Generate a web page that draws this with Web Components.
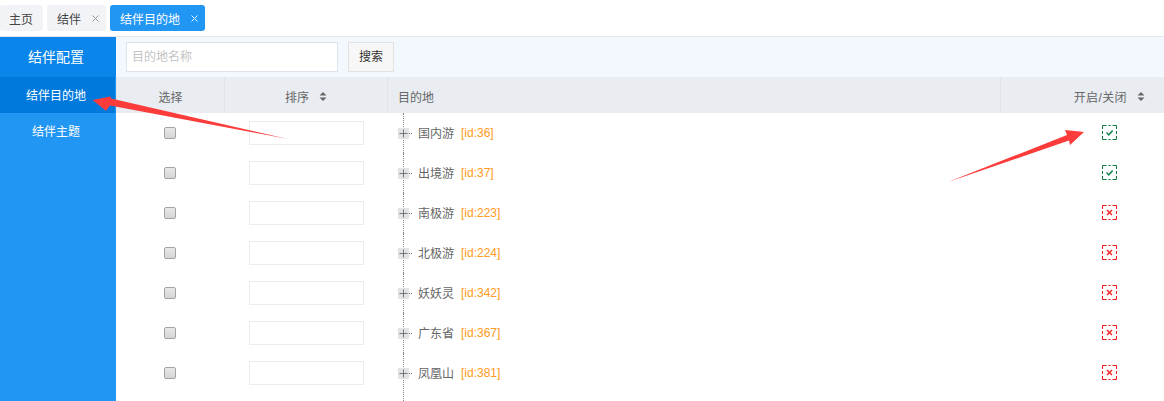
<!DOCTYPE html>
<html lang="zh">
<head>
<meta charset="utf-8">
<title>结伴目的地</title>
<style>
  html, body { margin: 0; height: 100%; overflow: hidden; background: #fff; }
  body { font: 12px "Liberation Sans", "Noto Sans CJK SC", sans-serif; color: #666; }
</style>
</head>
<body>
<app-shell></app-shell>

<script>
class TabItem extends HTMLElement {
  connectedCallback() {
    const closable = this.hasAttribute('closable')
    this.attachShadow({ mode: 'open' }).innerHTML = `
      <style>
        :host { display: flex; align-items: center; height: 26px; padding: 0 10px; gap: 11px; border-radius: 3px;
          background: #f2f3f6; color: #444; }
        :host([closable]) { padding-right: 7px; }
        :host([active]) { background: #2196f3; color: #fff; }
        svg { display: block; stroke: #999; }
        :host([active]) svg { stroke: #e8f4fe; }
      </style>
      <slot></slot>
      ${closable ? '<svg width="7" height="7" viewBox="0 0 7 7"><path d="M.5.5l6 6M6.5.5l-6 6" fill="none"/></svg>' : ''}
    `
  }
}
customElements.define('tab-item', TabItem)

class TabBar extends HTMLElement {
  connectedCallback() {
    this.attachShadow({ mode: 'open' }).innerHTML = `
      <style>
        :host { display: flex; gap: 4px; padding-top: 5px; height: 31px; border-bottom: 1px solid #e3e8ef; }
        ::slotted(tab-item:first-child) { padding-left: 9px; }
      </style>
      <slot></slot>
    `
  }
}
customElements.define('tab-bar', TabBar)

class SideNav extends HTMLElement {
  connectedCallback() {
    this.attachShadow({ mode: 'open' }).innerHTML = `
      <style>
        :host { display: block; width: 116px; flex: none; background: #2196f3; color: #fff; text-align: center; }
        .title { height: 40px; line-height: 40px; font-size: 14px; background: #0a85ea; padding-right: 4px; }
        .item { box-sizing: border-box; height: 36px; line-height: 38px; padding-right: 4px; }
        .on { background: #0079dc; margin-right: 1px; padding-right: 3px; }
      </style>
      <div class="title">结伴配置</div>
      <div class="item on">结伴目的地</div>
      <div class="item">结伴主题</div>
    `
  }
}
customElements.define('side-nav', SideNav)

class SearchBar extends HTMLElement {
  connectedCallback() {
    this.attachShadow({ mode: 'open' }).innerHTML = `
      <style>
        :host { display: flex; align-items: center; gap: 10px; height: 40px; padding: 0 10px; background: #f2f8fd; }
        .field { box-sizing: border-box; width: 212px; height: 30px; line-height: 28px; padding: 0 5px;
          border: 1px solid #dfe4ea; background: #fff; color: #c4c4c4; }
        .btn { box-sizing: border-box; width: 46px; height: 30px; line-height: 28px; text-align: center;
          border: 1px solid #e2e2e2; background: #f7f7f7; color: #333; }
      </style>
      <div class="field">目的地名称</div>
      <div class="btn">搜索</div>
    `
  }
}
customElements.define('search-bar', SearchBar)

const SORT_ICON = '<svg width="8" height="9" viewBox="0 0 8 9" fill="#666"><path d="M4 0l3.500 3.500h-7zM4 9L.5 5.500h7z"/></svg>'

class TableHead extends HTMLElement {
  connectedCallback() {
    this.attachShadow({ mode: 'open' }).innerHTML = `
      <style>
        :host { display: grid; grid-template-columns: 108px 163px 613px 164px; height: 36px; background: #e9ecf1; color: #666; }
        div { display: flex; align-items: center; gap: 10px; justify-content: center; border-left: 1px solid #e0e3e8; padding-top: 2px; box-sizing: border-box; }
        div:first-child { border-left: 0; }
        .name { justify-content: flex-start; padding-left: 10px; }
        .state { justify-content: flex-end; padding-right: 19px; }
        .state span { letter-spacing: .4px; }
        svg { display: block; }
      </style>
      <div>选择</div>
      <div>排序 ${SORT_ICON}</div>
      <div class="name">目的地</div>
      <div class="state"><span>开启/关闭</span> ${SORT_ICON}</div>
    `
  }
}
customElements.define('table-head', TableHead)

class StatusIcon extends HTMLElement {
  connectedCallback() {
    const on = this.getAttribute('state') === 'on'
    const color = on ? '#0b7a3f' : '#f01414'
    const mark = on
      ? '<path d="M4.500 7.500l2.200 2.300 4-4.200" fill="none" stroke="#1f8a55" stroke-width="1.600"/>'
      : '<path d="M5 5l5 5M10 5l-5 5" fill="none" stroke="#f02828" stroke-width="1.500"/>'
    this.attachShadow({ mode: 'open' }).innerHTML = `
      <style>:host { display: block; width: 15px; height: 15px; } svg { display: block; }</style>
      <svg width="15" height="15" viewBox="0 0 15 15">
        <path d="M.5 4V.5h4M10.500.5h4V4M14.500 6v3M14.500 11v3.500h-4M8.500 14.500h-2M4.500 14.500h-4V11M.5 9V6M6.500.5h2" fill="none" stroke="${color}"/>
        ${mark}
      </svg>
    `
  }
}
customElements.define('status-icon', StatusIcon)

class DestRow extends HTMLElement {
  connectedCallback() {
    const name = this.getAttribute('name')
    const id = this.getAttribute('dest-id')
    const state = this.getAttribute('state')
    this.attachShadow({ mode: 'open' }).innerHTML = `
      <style>
        :host { display: grid; grid-template-columns: 108px 163px 613px 164px; height: 40px; align-items: center; }
        .check { justify-self: center; box-sizing: border-box; width: 12px; height: 12px; border-radius: 2px;
          border: 1px solid #a3a3a3; background: linear-gradient(#e8e8e8, #d6d6d6); }
        .sort { justify-self: end; margin-right: 23px; box-sizing: border-box; width: 115px; height: 24px;
          border: 1px solid #ececec; background: #fff; }
        .tree { display: flex; align-items: center; height: 40px; padding-left: 11px; position: relative; }
        .line { position: absolute; left: 16px; top: 0; bottom: 0; border-left: 1px dotted #888; }
        :host(:last-child) .line { bottom: -8px; }
        .plus { position: relative; width: 11px; height: 11px; background: #e1e3e5; }
        .plus svg { display: block; }
        .dots { position: relative; width: 3px; border-top: 1px dotted #777; margin-right: 6px; }
        .label { margin-bottom: 2px; }
        .id { color: #ff9a22; margin-left: 7px; }
        .state { justify-self: end; margin-right: 47px; margin-bottom: 2px; }
      </style>
      <div class="check"></div>
      <div class="sort"></div>
      <div class="tree">
        <span class="line"></span>
        <span class="plus"><svg width="11" height="11" viewBox="0 0 11 11"><path d="M5.500 1.500v8M1.500 5.500h8" stroke="#777" fill="none"/></svg></span>
        <span class="dots"></span>
        <span class="label">${name}</span><span class="id">[id:${id}]</span>
      </div>
      <status-icon class="state" state="${state}"></status-icon>
    `
  }
}
customElements.define('dest-row', DestRow)

class ArrowLayer extends HTMLElement {
  connectedCallback() {
    this.attachShadow({ mode: 'open' }).innerHTML = `
      <style>
        :host { position: absolute; left: 0; top: 0; width: 1164px; height: 401px; pointer-events: none; }
        svg { display: block; }
      </style>
      <svg width="1164" height="401" viewBox="0 0 1164 401" fill="#fc3b3b">
        <path d="M92.500 100L110.500 96.500L111 98.500L288 139L110 105.500L106 110.700z"/>
        <path d="M1084 132L1065 130L1067 135L948 182L1069 140.500L1070 145z"/>
      </svg>
    `
  }
}
customElements.define('arrow-layer', ArrowLayer)

const ROWS = [
  ['国内游', 36, 'on'], ['出境游', 37, 'on'], ['南极游', 223, 'off'], ['北极游', 224, 'off'],
  ['妖妖灵', 342, 'off'], ['广东省', 367, 'off'], ['凤凰山', 381, 'off'],
]

class AppShell extends HTMLElement {
  connectedCallback() {
    const rows = ROWS.map(r => `<dest-row name="${r[0]}" dest-id="${r[1]}" state="${r[2]}"></dest-row>`).join('')
    this.attachShadow({ mode: 'open' }).innerHTML = `
      <style>
        :host { display: flex; flex-direction: column; position: relative; width: 1164px; height: 401px; overflow: hidden; }
        .body { display: flex; flex: 1; min-height: 0; }
        .main { flex: 1; min-width: 0; overflow: hidden; }
      </style>
      <tab-bar>
        <tab-item>主页</tab-item>
        <tab-item closable>结伴</tab-item>
        <tab-item closable active>结伴目的地</tab-item>
      </tab-bar>
      <div class="body">
        <side-nav></side-nav>
        <div class="main">
          <search-bar></search-bar>
          <table-head></table-head>
          ${rows}
        </div>
      </div>
      <arrow-layer></arrow-layer>
    `
  }
}
customElements.define('app-shell', AppShell)
</script>
</body>
</html>
